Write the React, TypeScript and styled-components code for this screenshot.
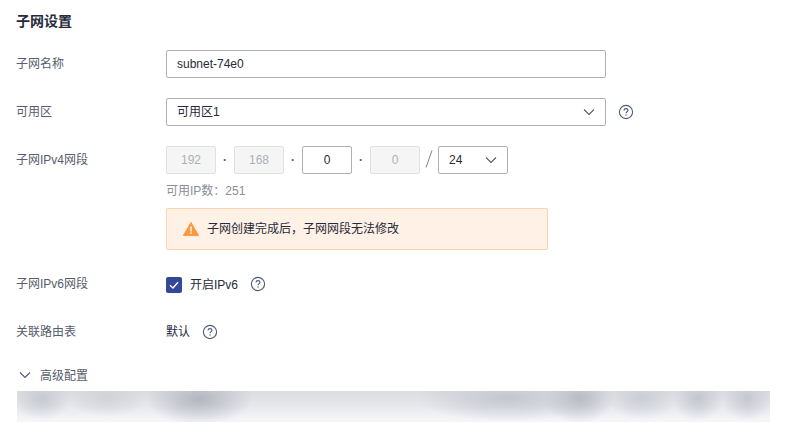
import React from "react";
import styled, { createGlobalStyle } from "styled-components";

const GlobalStyle = createGlobalStyle`
  html, body {
    margin: 0;
    padding: 0;
    background: #fff;
    font-family: "Liberation Sans", "Noto Sans CJK SC", sans-serif;
    font-size: 12px;
    color: #252b3a;
  }
`;

const Page = styled.div`
  width: 799px;
  height: 428px;
  box-sizing: border-box;
  padding: 13px 29px 0 16px;
  overflow: hidden;
  display: flex;
  flex-direction: column;
`;

const Title = styled.h3`
  margin: 0 0 20px;
  font-size: 14px;
  line-height: 17px;
  font-weight: 700;
  color: #252b3a;
`;

const Row = styled.div<{ $mb: number }>`
  display: grid;
  grid-template-columns: 150px 1fr;
  margin-bottom: ${(p) => p.$mb}px;
`;

const Label = styled.div`
  font-size: 12px;
  line-height: 28px;
  color: #575d6c;
`;

const Field = styled.div`
  display: flex;
  align-items: center;
  gap: 12px;
  min-height: 28px;
  line-height: 26px;
`;

const Stack = styled.div`
  display: flex;
  flex-direction: column;
`;

const TextBox = styled.div`
  width: 440px;
  height: 28px;
  box-sizing: border-box;
  border: 1px solid #adb0b8;
  border-radius: 2px;
  padding: 0 10px;
  display: flex;
  align-items: center;
  justify-content: space-between;
  font-size: 12px;
  line-height: 25px;
  color: #252b3a;
`;

const IpRow = styled.div`
  display: flex;
  align-items: center;
  height: 28px;
`;

const Octet = styled.div<{ $disabled?: boolean }>`
  width: 50px;
  height: 28px;
  box-sizing: border-box;
  border: 1px solid ${(p) => (p.$disabled ? "#dfe1e6" : "#adb0b8")};
  border-radius: 2px;
  background: ${(p) => (p.$disabled ? "#f5f5f6" : "#fff")};
  color: ${(p) => (p.$disabled ? "#adb0b8" : "#252b3a")};
  display: flex;
  align-items: center;
  justify-content: center;
  font-size: 12px;
`;

const Dot = styled.span`
  width: 18px;
  text-align: center;
  color: #575d6c;
  font-size: 12px;
  font-weight: 700;
`;

const Slash = styled.svg`
  width: 18px;
  height: 28px;
  flex: none;
`;

const MaskSelect = styled.div`
  width: 70px;
  height: 28px;
  box-sizing: border-box;
  border: 1px solid #adb0b8;
  border-radius: 2px;
  padding: 0 10px;
  display: flex;
  align-items: center;
  justify-content: space-between;
  font-size: 12px;
`;

const Hint = styled.div`
  margin-top: 9px;
  font-size: 12px;
  line-height: 17px;
  color: #8a8e99;
`;

const Alert = styled.div`
  margin-top: 8px;
  width: 382px;
  height: 42px;
  box-sizing: border-box;
  border: 1px solid #fcd5aa;
  border-radius: 2px;
  background: #fff1e6;
  padding: 0 16px;
  display: flex;
  align-items: center;
  gap: 8px;
  font-size: 12px;
  line-height: 38px;
  color: #252b3a;
`;

const CheckLabel = styled.div`
  display: flex;
  align-items: center;
  gap: 8px;
  padding-top: 2px;
`;

const CheckBox = styled.div`
  width: 16px;
  height: 16px;
  border-radius: 2px;
  background: #344899;
  display: flex;
  align-items: center;
  justify-content: center;
`;

const Advanced = styled.div`
  display: flex;
  align-items: center;
  gap: 9px;
  padding-left: 3px;
  height: 17px;
  font-size: 12px;
  color: #575d6c;
  margin-bottom: 8px;
`;

const BlurStrip = styled.div`
  margin-left: 1px;
  width: 753px;
  height: 31px;
  background:
    radial-gradient(ellipse 30px 22px at 25px 7px, #c6c9d0 0%, transparent 100%),
    radial-gradient(ellipse 42px 20px at 90px 6px, #d0d2d8 0%, transparent 100%),
    radial-gradient(ellipse 54px 26px at 182px 8px, #b3b6bf 0%, transparent 100%),
    radial-gradient(ellipse 90px 24px at 490px 7px, #c4c7cf 0%, transparent 100%),
    radial-gradient(ellipse 36px 25px at 562px 7px, #b6b9c2 0%, transparent 100%),
    radial-gradient(ellipse 36px 22px at 625px 7px, #cacdd4 0%, transparent 100%),
    radial-gradient(ellipse 26px 23px at 681px 7px, #c4c6ce 0%, transparent 100%),
    radial-gradient(ellipse 26px 23px at 730px 7px, #c6c8d0 0%, transparent 100%),
    linear-gradient(to bottom, #dcdde2 0%, #e6e7eb 45%, #f5f5f8 90%);
`;

const Chevron = () => (
  <svg width="12" height="12" viewBox="0 0 12 12" fill="none">
    <path d="M1 3.5 L6 8.5 L11 3.5" stroke="#4e5b78" strokeWidth="1.1" />
  </svg>
);

const Help = () => (
  <svg width="16" height="16" viewBox="0 0 16 16" fill="none">
    <circle cx="8" cy="8" r="6.6" stroke="#4e5b78" strokeWidth="1.1" />
    <path
      d="M6 6.4 C6 5.2 6.9 4.6 8 4.6 C9.1 4.6 10 5.3 10 6.3 C10 7.6 8 7.7 8 9.3"
      stroke="#4e5b78"
      strokeWidth="1.1"
    />
    <circle cx="8" cy="11" r="0.7" fill="#4e5b78" />
  </svg>
);

const App: React.FC = () => {
  return (
    <>
      <GlobalStyle />
      <Page>
        <Title>子网设置</Title>

        <Row $mb={20}>
          <Label>子网名称</Label>
          <Field>
            <TextBox>subnet-74e0</TextBox>
          </Field>
        </Row>

        <Row $mb={20}>
          <Label>可用区</Label>
          <Field>
            <TextBox>
              可用区1
              <Chevron />
            </TextBox>
            <Help />
          </Field>
        </Row>

        <Row $mb={20}>
          <Label>子网IPv4网段</Label>
          <Stack>
            <IpRow>
              <Octet $disabled>192</Octet>
              <Dot>·</Dot>
              <Octet $disabled>168</Octet>
              <Dot>·</Dot>
              <Octet>0</Octet>
              <Dot>·</Dot>
              <Octet $disabled>0</Octet>
              <Slash viewBox="0 0 18 28" fill="none">
                <path d="M6 21.5 L12 4.5" stroke="#7d818b" strokeWidth="1" />
              </Slash>
              <MaskSelect>
                24
                <Chevron />
              </MaskSelect>
            </IpRow>
            <Hint>可用IP数：251</Hint>
            <Alert>
              <svg width="16" height="14" viewBox="0 0 16 14">
                <path d="M8 0.5 L15.6 13.6 L0.4 13.6 Z" fill="#fa9841" stroke="#fa9841" strokeLinejoin="round" />
                <rect x="7.3" y="4.6" width="1.4" height="4.8" fill="#fff" />
                <rect x="7.3" y="10.4" width="1.4" height="1.5" fill="#fff" />
              </svg>
              子网创建完成后，子网网段无法修改
            </Alert>
          </Stack>
        </Row>

        <Row $mb={20}>
          <Label>子网IPv6网段</Label>
          <Field>
            <CheckLabel>
              <CheckBox>
                <svg width="12" height="12" viewBox="0 0 12 12" fill="none">
                  <path d="M2 6.2 L5 9 L10 3.2" stroke="#fff" strokeWidth="1.4" />
                </svg>
              </CheckBox>
              开启IPv6
            </CheckLabel>
            <Help />
          </Field>
        </Row>

        <Row $mb={20}>
          <Label>关联路由表</Label>
          <Field>
            默认
            <Help />
          </Field>
        </Row>

        <Advanced>
          <Chevron />
          高级配置
        </Advanced>
        <BlurStrip />
      </Page>
    </>
  );
};

export default App;
